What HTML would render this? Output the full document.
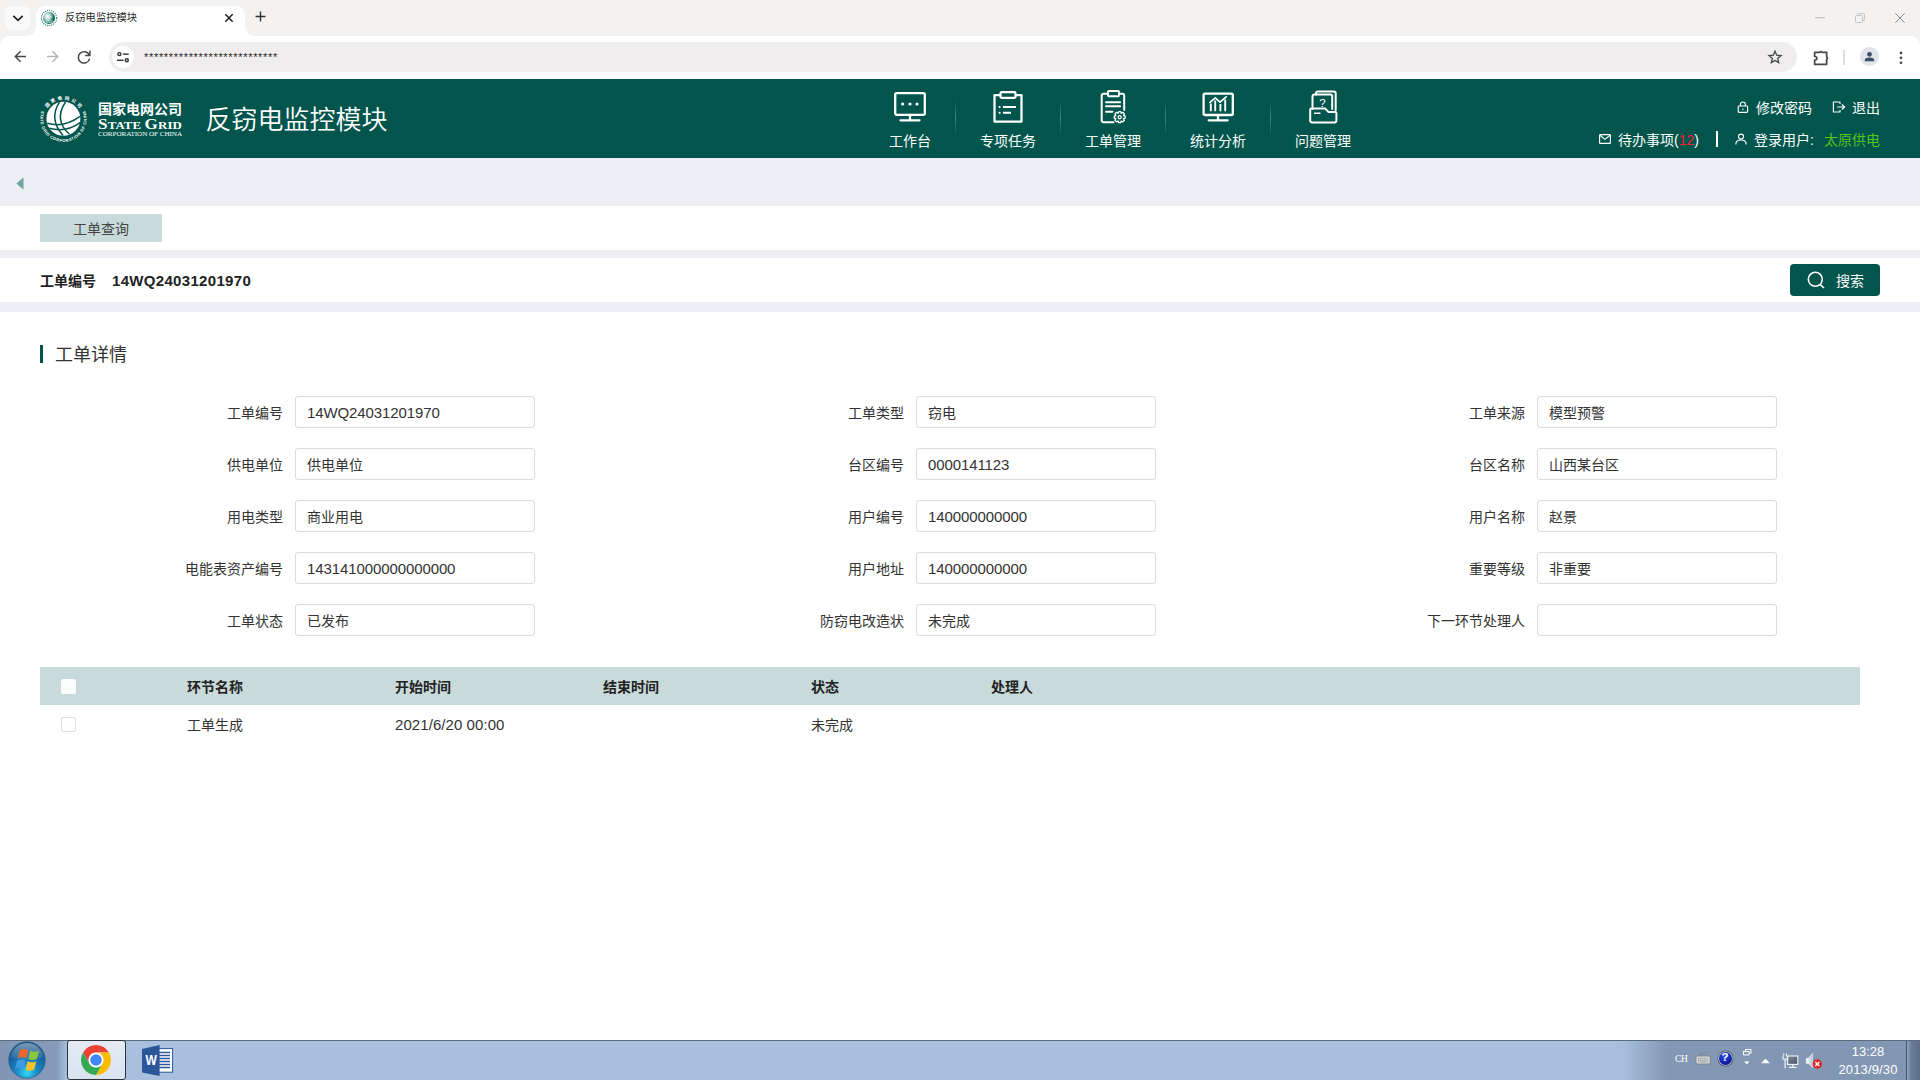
<!DOCTYPE html>
<html lang="zh-CN">
<head>
<meta charset="utf-8">
<title>反窃电监控模块</title>
<style>
*{box-sizing:border-box;margin:0;padding:0}
html,body{width:1920px;height:1080px;overflow:hidden;background:#fff}
body{font-family:"Liberation Sans","Noto Sans CJK SC",sans-serif;font-size:14px;color:#333;position:relative}
.abs{position:absolute}
.t{position:absolute;white-space:nowrap;line-height:1}
svg{position:absolute;overflow:visible}

/* ---------- browser chrome ---------- */
#tabbar{left:0;top:0;width:1920px;height:79px;background:#f3f2f1}
#tabsearch{left:5px;top:6px;width:25px;height:24px;border-radius:7px;background:#fbfafa}
#tab{left:36px;top:6px;width:209px;height:30px;background:#fff;border-radius:9px 9px 0 0}
#tab:before,#tab:after{content:"";position:absolute;bottom:0;width:9px;height:9px}
#tab:before{left:-9px;background:radial-gradient(circle at 0 0,transparent 8.5px,#fff 9px)}
#tab:after{right:-9px;background:radial-gradient(circle at 100% 0,transparent 8.5px,#fff 9px)}
#toolbar{left:0;top:36px;width:1920px;height:43px;background:#fff;border-radius:9px 9px 0 0}
#urlbar{left:109px;top:42px;width:1688px;height:30px;border-radius:15px;background:#efedee}
#tune{left:112px;top:46px;width:22px;height:22px;border-radius:11px;background:#fff}
#avatar{left:1860px;top:47px;width:19px;height:19px;border-radius:10px;background:#e1e3ea}

/* ---------- app header ---------- */
#hdr{left:0;top:79px;width:1920px;height:79px;background:#02554c}
.navlbl{color:#fff;font-size:14px;top:134px;text-align:center;width:100px}
.navsep{top:100px;width:1px;height:36px;background:linear-gradient(to bottom,rgba(255,255,255,0),rgba(255,255,255,.28) 50%,rgba(255,255,255,0))}
.hr{color:#fff;font-size:14px}

/* ---------- page ---------- */
#band1{left:0;top:158px;width:1920px;height:48px;background:#edeef3}
#band2{left:0;top:250px;width:1920px;height:8px;background:#edeef3}
#band3{left:0;top:302px;width:1920px;height:10px;background:#edeef3}
#ptab{left:40px;top:214px;width:122px;height:28px;background:#c9dada;color:#444;font-size:14px;text-align:center;line-height:31px}
#sbtn{left:1790px;top:264px;width:90px;height:32px;border-radius:4px;background:#02554c}
.lbl{font-size:14px;color:#333;text-align:right;width:200px;margin-left:1px}
.inp{width:240px;height:32px;border:1px solid #dcdcdc;border-radius:3px;background:#fff;font-size:14px;color:#333;line-height:33px;padding-left:11px;white-space:nowrap}
#thead{left:40px;top:667px;width:1820px;height:38px;background:#c9dada}
.th{font-size:14px;font-weight:bold;color:#222;top:680px}
.td{font-size:14px;color:#333;top:718px}
.num{font-size:15px;letter-spacing:-.1px;position:relative;top:-1.5px}
.cb{width:15px;height:15px;border-radius:2px;background:#fff}

/* ---------- taskbar ---------- */
#task{left:0;top:1040px;width:1920px;height:40px;background:linear-gradient(to right,#7f95b3 0,#859bb9 57px,#a8c0dd 67px,#a8c0dd 1622px,#8398b4 1668px,#8196b2 1920px);border-top:1px solid #5d6b7e}
</style>
</head>
<body>
<!-- ======= browser chrome ======= -->
<div class="abs" id="tabbar"></div>
<div class="abs" id="tabsearch"></div>
<div class="abs" id="tab"></div>
<div class="abs" id="toolbar"></div>
<div class="abs" id="urlbar"></div>
<div class="abs" id="tune"></div>
<div class="abs" id="avatar"></div>
<div class="t" style="left:65px;top:13.3px;font-size:10.3px;color:#1f1f1f">反窃电监控模块</div>
<div class="t" style="left:144px;top:51.5px;font-size:11px;color:#1f1f1f;letter-spacing:.68px">***************************</div>
<!--CHROME-ICONS-->
<svg style="left:12px;top:14px" width="12" height="8" viewBox="0 0 12 8" fill="none" stroke="#1f1f1f" stroke-width="1.7"><path d="M1.3 1.8L6 6.3L10.7 1.8"/></svg>
<svg style="left:40px;top:9px" width="18" height="18" viewBox="0 0 18 18"><defs><radialGradient id="fg" cx=".38" cy=".38" r=".7"><stop offset="0" stop-color="#fff"/><stop offset=".35" stop-color="#bfdcd6"/><stop offset=".75" stop-color="#0e6b5e"/><stop offset="1" stop-color="#0a5b50"/></radialGradient></defs><circle cx="9" cy="9" r="7.6" fill="none" stroke="#3d8f83" stroke-width="1.2" stroke-dasharray="1.2 .9"/><circle cx="9" cy="9" r="6" fill="url(#fg)"/><path d="M4.5 12.5Q9 10.5 13.5 12.5M5.5 14Q9 12.4 12.5 14" stroke="#e6f2ef" stroke-width=".7" fill="none"/></svg>
<svg style="left:224.2px;top:12.7px" width="10" height="10" viewBox="0 0 10 10" stroke="#1f1f1f" stroke-width="1.5"><path d="M1.3 1.3L8.7 8.7M8.7 1.3L1.3 8.7"/></svg>
<svg style="left:255px;top:11px" width="11" height="11" viewBox="0 0 11 11" stroke="#333" stroke-width="1.4"><path d="M5.5 0.5V10.5M0.5 5.5H10.5"/></svg>
<!-- window controls -->
<svg style="left:1815px;top:17px" width="10" height="2" viewBox="0 0 10 2"><rect width="10" height="1.4" fill="#c8c8c8"/></svg>
<svg style="left:1855px;top:13px" width="10" height="10" viewBox="0 0 10 10" fill="none" stroke="#c4c4c4" stroke-width="1"><rect x=".5" y="2.5" width="7" height="7" rx="1"/><path d="M2.5 2.5V1.5Q2.5 .5 3.5 .5H8.5Q9.5 .5 9.5 1.5V6.5Q9.5 7.5 8.5 7.5H7.5"/></svg>
<svg style="left:1895px;top:13px" width="10" height="10" viewBox="0 0 10 10" stroke="#8a8a8a" stroke-width="1"><path d="M.3 .3L9.7 9.7M9.7 .3L.3 9.7"/></svg>
<!-- nav buttons -->
<svg style="left:14px;top:50px" width="13" height="13" viewBox="0 0 13 13" fill="none" stroke="#474747" stroke-width="1.5"><path d="M12 6.5H1.5M6.6 1.2L1.3 6.5L6.6 11.8"/></svg>
<svg style="left:46px;top:50px" width="13" height="13" viewBox="0 0 13 13" fill="none" stroke="#b4b4b4" stroke-width="1.5"><path d="M1 6.5H11.5M6.4 1.2L11.7 6.5L6.4 11.8"/></svg>
<svg style="left:76px;top:49px" width="16" height="16" viewBox="0 0 16 16" fill="none" stroke="#474747" stroke-width="1.5"><path d="M13.3 6.2A5.7 5.7 0 1 0 13.6 9.6"/><path d="M13.9 1.6V6.4H9.2" stroke-linejoin="miter"/></svg>
<svg style="left:116px;top:51px" width="14" height="12" viewBox="0 0 14 12" fill="none" stroke="#333" stroke-width="1.4"><circle cx="3.4" cy="3.1" r="1.5"/><path d="M6.9 3.1H12.7"/><path d="M1 9.3H7.6"/><circle cx="10.8" cy="9.3" r="1.5"/></svg>
<svg style="left:1768px;top:50px" width="14" height="14" viewBox="0 0 14 14" fill="none" stroke="#474747" stroke-width="1.3" stroke-linejoin="miter"><path d="M7 1.2L8.7 5.2L13 5.6L9.7 8.4L10.7 12.6L7 10.4L3.3 12.6L4.3 8.4L1 5.6L5.3 5.2Z"/></svg>
<svg style="left:1812.5px;top:49.5px" width="16" height="16" viewBox="0 0 16 16" fill="none" stroke="#474747" stroke-width="1.7" stroke-linejoin="round"><path d="M1.65 2.35H6.6Q7.7.9 8.8 2.35H13.65V7Q15.1 8.2 13.65 9.4V14.4H1.65V10.1Q3.9 10.1 3.9 8.3Q3.9 6.5 1.65 6.5Z"/></svg>
<div class="abs" style="left:1843px;top:50px;width:2px;height:15px;background:#dedede"></div>
<svg style="left:1860px;top:47px" width="19" height="19" viewBox="0 0 19 19"><circle cx="9.5" cy="7.3" r="2.4" fill="#3f4c68"/><path d="M4.7 13.6Q4.7 10.6 9.5 10.6Q14.3 10.6 14.3 13.6V14.2H4.7Z" fill="#3f4c68"/></svg>
<svg style="left:1899px;top:51px" width="4" height="14" viewBox="0 0 4 14" fill="#474747"><circle cx="2" cy="1.9" r="1.35"/><circle cx="2" cy="6.8" r="1.35"/><circle cx="2" cy="11.8" r="1.35"/></svg>
<!--/CHROME-ICONS-->

<!-- ======= app header ======= -->
<div class="abs" id="hdr"></div>
<!--LOGO-->
<svg style="left:39px;top:95px" width="49" height="48" viewBox="0 0 49 48">
<defs><path id="arcT" d="M8.03 13.57A19.3 19.3 0 0 1 40.77 13.57"/><path id="arcB" d="M2.89 15.11A23.2 23.2 0 1 0 45.91 15.11"/></defs>
<circle cx="24.4" cy="23.8" r="17" fill="#fff"/>
<g fill="none" stroke="#02554c" stroke-width="1.5">
<path d="M20.5 7.2Q9.5 24 24 40.6"/><path d="M26.5 7Q14.5 25 30.5 39.3"/>
<path d="M8.3 28.3Q25 33 41 21.3"/><path d="M10.3 33.3Q27 38 41.5 27.3"/>
</g>
<text font-family="'Liberation Sans','Noto Sans CJK SC',sans-serif" font-size="4.6" font-weight="bold" fill="#fff" textLength="38.1" lengthAdjust="spacing"><textPath href="#arcT" startOffset=".5">国家电网公司</textPath></text>
<text font-family="'Liberation Sans',sans-serif" font-size="4.1" font-weight="bold" fill="#fff" textLength="89.2" lengthAdjust="spacing"><textPath href="#arcB" startOffset=".7">STATE GRID CORPORATION OF CHINA</textPath></text>
</svg>
<div class="t" style="left:98px;top:102px;font-size:14px;font-weight:bold;color:#fff;letter-spacing:0">国家电网公司</div>
<div class="t" id="sg" style="left:98px;top:117px;font-family:'Liberation Serif',serif;font-weight:bold;color:#fff;font-size:11.3px;letter-spacing:.1px;transform:scaleX(1.14);transform-origin:0 0"><span style="font-size:15px">S</span>TATE <span style="font-size:15px">G</span>RID</div>
<div class="t" id="coc" style="left:98px;top:131px;font-family:'Liberation Serif',serif;color:#fff;font-size:6.6px;letter-spacing:-.05px;transform:scaleX(1.08);transform-origin:0 0">CORPORATION OF CHINA</div>
<!--/LOGO-->
<div class="t" style="left:205.5px;top:107.3px;font-size:26px;color:#fff;font-weight:350">反窃电监控模块</div>
<!--NAV-->
<!-- 1 monitor -->
<svg style="left:893px;top:90px" width="34" height="34" viewBox="0 0 34 34" fill="none" stroke="#fff" stroke-width="2.3" stroke-linecap="round" stroke-linejoin="round"><rect x="2.2" y="3.2" width="29.6" height="21.6" rx="1.5"/><path d="M17 25V30M7.5 30.3H26.5"/><g fill="#fff" stroke="none"><circle cx="9.7" cy="14" r="1.6"/><circle cx="17" cy="14" r="1.6"/><circle cx="24" cy="14" r="1.6"/></g></svg>
<!-- 2 clipboard -->
<svg style="left:991px;top:90px" width="34" height="34" viewBox="0 0 34 34" fill="none" stroke="#fff" stroke-width="2.3" stroke-linejoin="round"><path d="M9.5 5.2H3.5V31.6H30.5V5.2H24.5"/><rect x="9.5" y="2.2" width="15" height="5.6" rx="1"/><path d="M12 17H25M12 22.8H20" stroke-width="2"/><g fill="#fff" stroke="none"><circle cx="8.6" cy="17" r="1.1"/><circle cx="8.6" cy="22.8" r="1.1"/></g></svg>
<!-- 3 doc with gear -->
<svg style="left:1096px;top:88px" width="34" height="38" viewBox="0 0 34 38" fill="none" stroke="#fff" stroke-width="2" stroke-linejoin="round" stroke-linecap="round"><path d="M12 5.8H7.7Q5.7 5.8 5.7 7.8V32.2Q5.7 34.2 7.7 34.2H17.5"/><path d="M23 5.8H26.2Q28.2 5.8 28.2 7.8V22"/><rect x="12" y="3" width="11" height="5.2" rx="1"/><path d="M10 14.3H24.2M10 18.3H24.2M10 23.8H16.5" stroke-width="1.9"/><g transform="translate(23.7 29.2) scale(.9)" stroke-width="1.5"><path d="M-1.2-6.2H1.2L1.7-4.4L3.5-5.4L5.2-3.7L4.2-1.9L6-1.3V1.1L4.2 1.7L5.2 3.5L3.5 5.2L1.7 4.2L1.2 6H-1.2L-1.7 4.2L-3.5 5.2L-5.2 3.5L-4.2 1.7L-6 1.1V-1.3L-4.2-1.9L-5.2-3.7L-3.5-5.4L-1.7-4.4Z" fill="#02554c"/><circle r="1.7"/></g></svg>
<!-- 4 chart monitor -->
<svg style="left:1201px;top:90px" width="34" height="34" viewBox="0 0 34 34" fill="none" stroke="#fff" stroke-width="2.3" stroke-linecap="round" stroke-linejoin="round"><rect x="2.6" y="3.6" width="29.2" height="21.4" rx="1.5"/><path d="M17 25.2V30M7.7 30.3H26.7"/><path d="M9.8 13.5V21.2M14.2 10.6V21.2M19.4 14V21.2M24.2 9.5V21.2" stroke-width="1.9" stroke-linecap="butt"/><path d="M9 12.4L14.2 7.8L19 12.2L25.2 6.8" stroke-width="1.7"/></svg>
<!-- 5 folder ? -->
<svg style="left:1306px;top:88px" width="34" height="38" viewBox="0 0 34 38" fill="none" stroke="#fff" stroke-width="2" stroke-linejoin="round" stroke-linecap="round"><path d="M6.5 21V8.6Q6.5 6.6 8.5 6.6H24.2Q26.2 6.6 26.2 8.6V21" /><path d="M10 6.4V5.4Q10 3.6 12 3.6H27.7Q29.7 3.6 29.7 5.4V22"/><path d="M4.2 23V32.6Q4.2 34.4 6 34.4H28.6Q30.4 34.4 30.4 32.6V25.2Q30.4 24 29.2 24H22.5L19 20.4H5.6Q4.2 20.4 4.2 21.8Z"/><path d="M8.6 25.3H14" stroke-width="1.4"/></svg>
<div class="t" style="left:1316px;top:97.5px;width:13px;text-align:center;font-size:11.5px;color:#fff">?</div>
<div class="t navlbl" style="left:860px">工作台</div>
<div class="t navlbl" style="left:958px">专项任务</div>
<div class="t navlbl" style="left:1063px">工单管理</div>
<div class="t navlbl" style="left:1168px">统计分析</div>
<div class="t navlbl" style="left:1273px">问题管理</div>
<div class="abs navsep" style="left:955px"></div>
<div class="abs navsep" style="left:1060px"></div>
<div class="abs navsep" style="left:1165px"></div>
<div class="abs navsep" style="left:1270px"></div>
<!--/NAV-->
<!--HDR-RIGHT-->
<svg style="left:1737px;top:101px" width="12" height="12" viewBox="0 0 12 12" fill="none" stroke="#fff" stroke-width="1.15"><rect x="1.2" y="5" width="9.4" height="6.3" rx=".8"/><path d="M3.4 5V3.6Q3.4 1 5.9 1Q8.4 1 8.4 3.6V5"/><circle cx="5.9" cy="8.2" r=".7" fill="#fff" stroke="none"/></svg>
<div class="t hr" style="left:1756px;top:101px">修改密码</div>
<svg style="left:1832px;top:101px" width="14" height="12" viewBox="0 0 14 12" fill="none" stroke="#fff" stroke-width="1.15" stroke-linejoin="round"><path d="M8 3V1H1.4V11H8V9"/><path d="M5.2 6H12.4M9.8 3.3L12.6 6L9.8 8.7"/></svg>
<div class="t hr" style="left:1852px;top:101px">退出</div>
<svg style="left:1599px;top:134px" width="12" height="10" viewBox="0 0 12 10" fill="none" stroke="#fff" stroke-width="1.15" stroke-linejoin="round"><rect x=".6" y=".6" width="10.8" height="8.8" rx=".6"/><path d="M1 1.2L6 5.4L11 1.2"/></svg>
<div class="t hr" style="left:1618px;top:133px">待办事项(<span style="color:#f5222d">12</span>)</div>
<div class="abs" style="left:1716px;top:131px;width:2px;height:16px;background:#fff"></div>
<svg style="left:1735px;top:133px" width="12" height="12" viewBox="0 0 12 12" fill="none" stroke="#fff" stroke-width="1.15"><circle cx="6" cy="3.6" r="2.5"/><path d="M.8 11.4Q.8 7 6 7Q11.2 7 11.2 11.4"/></svg>
<div class="t hr" style="left:1754px;top:133px">登录用户:</div>
<div class="t hr" style="left:1824px;top:133px;color:#52c41a">太原供电</div>
<!--/HDR-RIGHT-->

<!-- ======= page ======= -->
<div class="abs" id="band1"></div>
<div class="abs" id="band2"></div>
<div class="abs" id="band3"></div>
<svg style="left:16px;top:177px" width="8" height="13" viewBox="0 0 8 13"><path d="M7.5 0.5V12.5L0.3 6.5Z" fill="#6fa5a0"/></svg>
<div class="abs" id="ptab">工单查询</div>
<div class="t" style="left:40px;top:273.7px;font-size:14px;font-weight:bold;color:#222">工单编号</div>
<div class="t" style="left:112px;top:273px;font-size:15px;letter-spacing:.32px;font-weight:bold;color:#222">14WQ24031201970</div>
<div class="abs" id="sbtn"></div>
<svg style="left:1806px;top:270px" width="20" height="20" viewBox="0 0 20 20" fill="none" stroke="#fff" stroke-width="1.6"><circle cx="9.3" cy="9.3" r="7"/><path d="M14.3 14.6L18 18"/></svg>
<div class="t" style="left:1836px;top:274px;font-size:14px;color:#fff">搜索</div>

<div class="abs" style="left:40px;top:345px;width:3px;height:18px;background:#02554c"></div>
<div class="t" style="left:55px;top:346px;font-size:18px;color:#333">工单详情</div>
<!--FORM-->
<div class="t lbl" style="left:82px;top:406px">工单编号</div>
<div class="abs inp" style="left:295px;top:396px"><span class="num">14WQ24031201970</span></div>
<div class="t lbl" style="left:82px;top:458px">供电单位</div>
<div class="abs inp" style="left:295px;top:448px">供电单位</div>
<div class="t lbl" style="left:82px;top:510px">用电类型</div>
<div class="abs inp" style="left:295px;top:500px">商业用电</div>
<div class="t lbl" style="left:82px;top:562px">电能表资产编号</div>
<div class="abs inp" style="left:295px;top:552px"><span class="num">143141000000000000</span></div>
<div class="t lbl" style="left:82px;top:614px">工单状态</div>
<div class="abs inp" style="left:295px;top:604px">已发布</div>
<div class="t lbl" style="left:703px;top:406px">工单类型</div>
<div class="abs inp" style="left:916px;top:396px">窃电</div>
<div class="t lbl" style="left:703px;top:458px">台区编号</div>
<div class="abs inp" style="left:916px;top:448px"><span class="num">0000141123</span></div>
<div class="t lbl" style="left:703px;top:510px">用户编号</div>
<div class="abs inp" style="left:916px;top:500px"><span class="num">140000000000</span></div>
<div class="t lbl" style="left:703px;top:562px">用户地址</div>
<div class="abs inp" style="left:916px;top:552px"><span class="num">140000000000</span></div>
<div class="t lbl" style="left:703px;top:614px">防窃电改造状</div>
<div class="abs inp" style="left:916px;top:604px">未完成</div>
<div class="t lbl" style="left:1324px;top:406px">工单来源</div>
<div class="abs inp" style="left:1537px;top:396px">模型预警</div>
<div class="t lbl" style="left:1324px;top:458px">台区名称</div>
<div class="abs inp" style="left:1537px;top:448px">山西某台区</div>
<div class="t lbl" style="left:1324px;top:510px">用户名称</div>
<div class="abs inp" style="left:1537px;top:500px">赵景</div>
<div class="t lbl" style="left:1324px;top:562px">重要等级</div>
<div class="abs inp" style="left:1537px;top:552px">非重要</div>
<div class="t lbl" style="left:1324px;top:614px">下一环节处理人</div>
<div class="abs inp" style="left:1537px;top:604px"></div>
<!--/FORM-->

<div class="abs" id="thead"></div>
<div class="abs cb" style="left:60.7px;top:678.8px;background:#fbfcfc"></div>
<div class="t th" style="left:187px">环节名称</div>
<div class="t th" style="left:395px">开始时间</div>
<div class="t th" style="left:603px">结束时间</div>
<div class="t th" style="left:811px">状态</div>
<div class="t th" style="left:991px">处理人</div>
<div class="abs cb" style="left:60.5px;top:716.7px;border:1px solid #dcdfe6"></div>
<div class="t td" style="left:187px">工单生成</div>
<div class="t td" style="left:395px"><span class="num" style="letter-spacing:.07px">2021/6/20 00:00</span></div>
<div class="t td" style="left:811px">未完成</div>

<!-- ======= taskbar ======= -->
<div class="abs" id="task"></div>
<!--TASK-ICONS-->
<!-- start orb -->
<svg style="left:8px;top:1041px" width="38" height="38" viewBox="0 0 38 38">
<defs>
<radialGradient id="orb" cx=".5" cy=".85" r=".85"><stop offset="0" stop-color="#35d8f5"/><stop offset=".35" stop-color="#1a86c4"/><stop offset=".75" stop-color="#175c95"/><stop offset="1" stop-color="#1c4f7e"/></radialGradient>
<linearGradient id="orbhi" x1="0" y1="0" x2="0" y2="1"><stop offset="0" stop-color="#fff" stop-opacity=".75"/><stop offset="1" stop-color="#fff" stop-opacity=".08"/></linearGradient>
</defs>
<circle cx="19" cy="19" r="18.2" fill="url(#orb)" stroke="#2b5f8d" stroke-width=".8"/>
<path d="M2.6 16A16.6 16.6 0 0 1 35.4 16Q19 22 2.6 16Z" fill="url(#orbhi)" opacity=".55"/>
<g transform="translate(-1.2 -2.8) scale(1.17)"><path d="M11.2 10.2Q14.6 8.2 18.4 10.2L16.6 17.2Q13.2 15.4 9.4 17.2Z" fill="#f0662a"/>
<path d="M20.2 10.8Q23.8 12.6 27.6 10.6L25.8 17.6Q22 19.6 18.4 17.8Z" fill="#8cc63f"/>
<path d="M8.8 19.2Q12.6 17.4 16 19.2L14.2 26.4Q10.8 24.4 7 26.2Z" fill="#3d9be0"/>
<path d="M17.8 19.8Q21.4 21.6 25.2 19.6L23.4 26.8Q19.6 28.8 16 26.8Z" fill="#fbc12d"/></g>
</svg>
<!-- chrome button -->
<div class="abs" style="left:67px;top:1040px;width:59px;height:40px;border:1px solid #2f3338;border-radius:3px;background:linear-gradient(#e4ebf5,#d9e3f0)"></div>
<svg style="left:80.5px;top:1045px" width="30" height="30" viewBox="2 2 44 44">
<circle cx="24" cy="24" r="21.5" fill="#fff"/>
<path d="M4.95 13A22 22 0 0 1 43.05 13L24 13A11 11 0 0 0 14.47 29.5Z" fill="#ea4335"/>
<path d="M43.05 13A22 22 0 0 1 24 46L33.53 29.5A11 11 0 0 0 24 13Z" fill="#fbbc04"/>
<path d="M24 46A22 22 0 0 1 4.95 13L14.47 29.5A11 11 0 0 0 33.53 29.5Z" fill="#34a853"/>
<circle cx="24" cy="24" r="10.6" fill="#fff"/><circle cx="24" cy="24" r="8.4" fill="#4285f4"/>
</svg>
<!-- word -->
<svg style="left:142px;top:1045px" width="32" height="32" viewBox="0 0 32 32">
<rect x="14" y="3.6" width="16.6" height="23.6" fill="#fff" stroke="#2b579a" stroke-width="1"/>
<path d="M17 7.5H28M17 10.5H28M17 13.5H28M17 16.5H28M17 19.5H28M17 22.5H28" stroke="#2b579a" stroke-width="1.5"/>
<path d="M0 4L17.6 0V31L0 27.4Z" fill="#2b579a"/>
</svg>
<div class="t" style="left:144px;top:1052px;width:14px;text-align:center;font-size:15px;font-weight:bold;color:#fff;transform:scaleX(.8)">W</div>
<!-- tray -->
<div class="t" style="left:1674.5px;top:1052.5px;font-family:'Liberation Serif',serif;font-size:11px;color:#fff;letter-spacing:-.4px;transform:scaleX(.86);transform-origin:0 0">CH</div>
<svg style="left:1695px;top:1051px" width="16" height="14" viewBox="0 0 16 14" fill="none"><path d="M4.2 4.8Q4.6 1.8 7.6 2.4Q10.4 3 13.2 .9" stroke="#7f848b" stroke-width="1"/><rect x=".9" y="5" width="14.4" height="8" rx="1.3" fill="#dcdcda" stroke="#7f848b" stroke-width="1.1"/><path d="M2.8 7.3H13.4M2.8 9.1H13.4" stroke="#8d9196" stroke-width="1.1" stroke-dasharray="1.3 .6"/><path d="M2.8 11H4M5 11H11.2M12.2 11H13.4" stroke="#8d9196" stroke-width="1.1"/></svg>
<svg style="left:1716.5px;top:1049.5px" width="17" height="17" viewBox="0 0 17 17"><defs><radialGradient id="hb" cx=".4" cy=".3" r=".8"><stop offset="0" stop-color="#2f4ff0"/><stop offset="1" stop-color="#050c8a"/></radialGradient></defs><circle cx="8.5" cy="8.5" r="8" fill="#4b5058"/><circle cx="8.5" cy="8.5" r="7.3" fill="#b9bec6"/><circle cx="8.5" cy="8.5" r="6.5" fill="url(#hb)"/></svg>
<div class="t" style="left:1717px;top:1052.3px;width:16px;text-align:center;font-size:11.5px;font-weight:bold;color:#fff">?</div>
<svg style="left:1743px;top:1049px" width="9" height="17" viewBox="0 0 9 17" fill="none" stroke="#fff" stroke-width="1"><rect x="2.5" y=".5" width="5.5" height="3.4"/><rect x=".5" y="2.5" width="5.5" height="3.4" fill="#8297b3"/><path d="M1.2 12.4H6.4L3.8 15.4Z" fill="#fff" stroke="none"/></svg>
<svg style="left:1761px;top:1058px" width="9" height="6" viewBox="0 0 9 6"><path d="M4.5.5L8.7 5H.3Z" fill="#fff"/><path d="M.3 5.3H8.7" stroke="#b9c3d6" stroke-width=".7"/></svg>
<svg style="left:1782px;top:1053px" width="17" height="16" viewBox="0 0 17 16" fill="none"><defs><linearGradient id="mon" x1="0" y1="0" x2="1" y2="1"><stop offset="0" stop-color="#7d8a9c"/><stop offset="1" stop-color="#4a5566"/></linearGradient></defs><rect x="5.6" y="3" width="10.2" height="8.4" fill="url(#mon)" stroke="#f4f6f9" stroke-width="1.1"/><path d="M7 14.4H14.4M10.7 11.6V14.2" stroke="#f4f6f9" stroke-width="1.1"/><path d="M1.7.4V3M4.5.4V3" stroke="#fff" stroke-width="1"/><path d="M1 2.8V6.2H5.2V2.8" stroke="#fff" stroke-width="1" fill="#8297b3"/><path d="M3.1 6.4V15.2" stroke="#fff" stroke-width="1.1"/></svg>
<svg style="left:1805px;top:1052px" width="18" height="18" viewBox="0 0 18 18"><defs><linearGradient id="spk" x1="0" y1="0" x2="1" y2="0"><stop offset="0" stop-color="#fff"/><stop offset="1" stop-color="#b9c0cb"/></linearGradient></defs><path d="M1.2 6.2H3.4L7.6 1.2V15.8L3.4 11.4H1.2Z" fill="url(#spk)" stroke="#eef0f4" stroke-width=".5"/><circle cx="12.3" cy="12" r="4.7" fill="#e3262d"/><path d="M10.3 10L14.3 14M14.3 10L10.3 14" stroke="#fff" stroke-width="1.5"/></svg>
<div class="t" style="left:1838px;top:1044.5px;width:60px;text-align:center;font-size:13px;color:#fff">13:28</div>
<div class="t" style="left:1838px;top:1062.5px;width:60px;text-align:center;font-size:13px;letter-spacing:.15px;color:#fff">2013/9/30</div>
<div class="abs" style="left:1906px;top:1041px;width:14px;height:39px;border-left:1px solid #4a5a70;background:linear-gradient(to right,#93a6bf 0,#6c7f9a 4px,#5d6f88 100%)"></div>
<!--/TASK-ICONS-->
</body>
</html>
